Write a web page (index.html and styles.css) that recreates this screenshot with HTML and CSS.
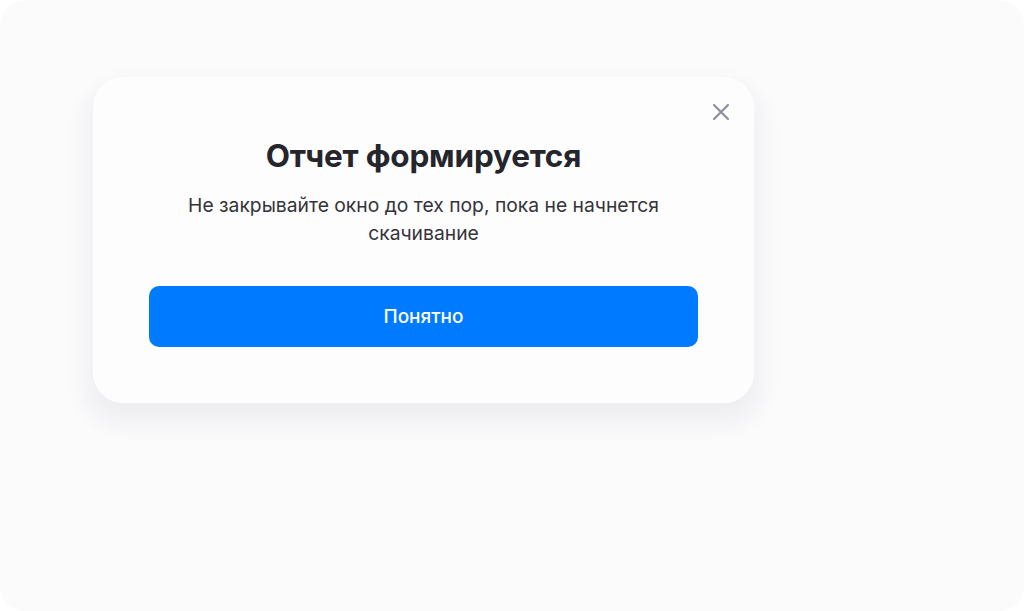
FILE: index.html
```html
<!DOCTYPE html>
<html lang="ru">
<head>
<meta charset="utf-8">
<link rel="stylesheet" href="styles.css">
</head>
<body>
<div class="stage">
  <div class="modal">
    <button class="close" aria-label="Закрыть">
      <svg width="18" height="18" viewBox="0 0 18 18"><path d="M2 2L16 16M16 2L2 16" stroke="#8c8ea6" stroke-width="2.2" stroke-linecap="round"/></svg>
    </button>
    <h1 class="title">Отчет формируется</h1>
    <p class="text">Не закрывайте окно до тех пор, пока не начнется скачивание</p>
    <button class="ok">Понятно</button>
  </div>
</div>
</body>
</html>
```
FILE: styles.css
```css
html, body {
  margin: 0;
  padding: 0;
  background: #ffffff;
}
.stage {
  box-sizing: border-box;
  width: 1024px;
  height: 611px;
  background: #fbfbfc;
  border-radius: 26px;
  padding: 77px 0 0 93px;
  font-family: "Inter", "Noto Sans", sans-serif;
}
.modal {
  position: relative;
  box-sizing: border-box;
  width: 661px;
  height: 326px;
  background: #fdfdfd;
  border-radius: 30px;
  box-shadow: 0 14px 22px 8px rgba(40, 40, 70, 0.055);
  padding: 59px 56px 0;
  display: flex;
  flex-direction: column;
  align-items: center;
}
.close {
  position: absolute;
  top: 23px;
  right: 21px;
  width: 24px;
  height: 24px;
  padding: 3px;
  border: 0;
  background: none;
}
.title {
  margin: 0;
  font-size: 31.5px;
  line-height: 40px;
  font-weight: 700;
  color: #25252c;
  letter-spacing: -0.2px;
}
.text {
  margin: 15px 0 0;
  width: 500px;
  text-align: center;
  font-size: 19.3px;
  line-height: 28px;
  color: #33333a;
}
.ok {
  margin-top: 39px;
  width: 549px;
  height: 61px;
  border: 0;
  border-radius: 10px;
  background: #007bff;
  color: #ffffff;
  font-family: "Inter", "Noto Sans", sans-serif;
  font-size: 19px;
  font-weight: 500;
}
```
